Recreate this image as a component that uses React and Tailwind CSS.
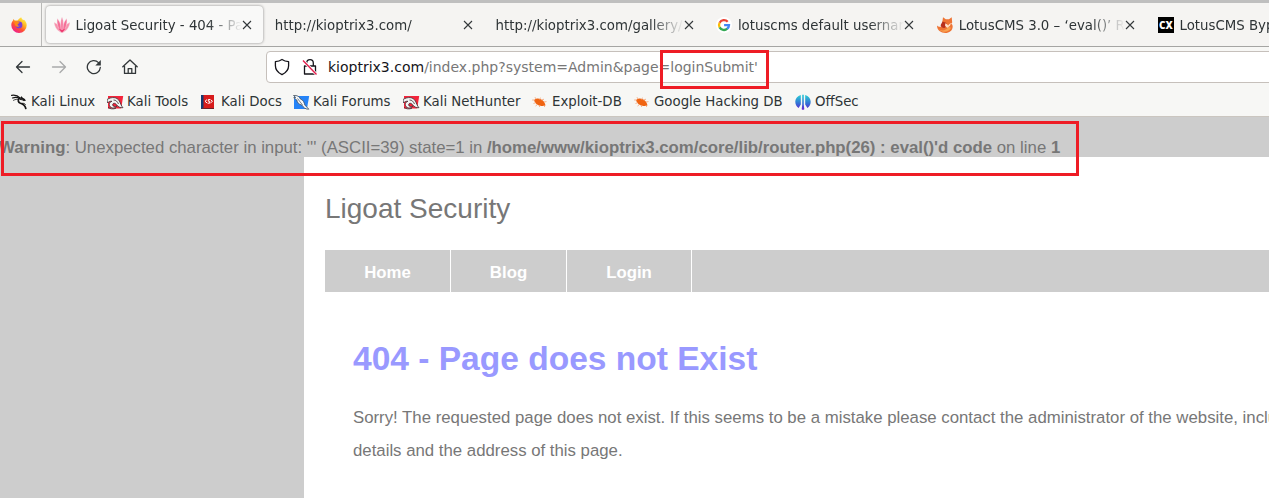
import React from "react";

function Firefox() {
  return (
    <svg width="16" height="16" viewBox="0 0 16 16" className="block shrink-0">
      <defs>
        <linearGradient id="ff" x1="0.85" y1="0.1" x2="0.25" y2="0.95">
          <stop offset="0" stopColor="#fff04a" />
          <stop offset="0.35" stopColor="#ffb01f" />
          <stop offset="0.65" stopColor="#ff5033" />
          <stop offset="1" stopColor="#ee1f8d" />
        </linearGradient>
      </defs>
      <path d="M10.2 0.2c.3 1.300 1.100 1.900 1.800 2.700l1-.2c1.600 1.300 2.700 3.200 2.700 5.500A7.700 7.700 0 0 1 .3 8.300C.3 6 1 4.500 2 3.400l.4-1.500 1.300 1.500 2.800.2c1-1.200 2.100-2.700 3.700-3.400z" fill="url(#ff)" />
      <circle cx="8" cy="7.900" r="3.400" fill="#7a3fd6" />
      <path d="M3.600 4.600c1.600-.5 2.900-.2 3.600.5l1.500.4c-.4 1-1.400 1.200-2 1.400-.3 1.400.8 2.100 2 1.800-.8 1.200-2.300 1.500-3.700.6C3.900 8.500 3.300 6.500 3.600 4.600z" fill="#ff8a16" />
    </svg>
  );
}

function Lotus() {
  return (
    <svg width="16" height="16" viewBox="0 0 16 16" className="block shrink-0">
      <g stroke="#f7f7f5" strokeWidth=".35">
        <path d="M8 15.800C3.500 14.500.7 10.500 0 5.300 3.800 7 7 10.500 8 15.800z" fill="#f792ad" />
        <path d="M8 15.800C12.500 14.500 15.300 10.500 16 5.300 12.200 7 9 10.500 8 15.800z" fill="#f792ad" />
        <path d="M8 15.800C4 12 2.500 6.500 3.300 1.600 6 4.500 8 10 8 15.800z" fill="#f56f97" />
        <path d="M8 15.800C12 12 13.500 6.500 12.700 1.600 10 4.500 8 10 8 15.800z" fill="#f56f97" />
        <path d="M8 15.800C6 10 6.300 4 8 0c1.700 4 2 10 0 15.800z" fill="#f77fa3" />
      </g>
      <path d="M4.500 11.500l3.500 4.300 3.500-4.300L8 13z" fill="#ee3a70" />
    </svg>
  );
}

function Google() {
  return (
    <svg width="16" height="16" viewBox="0 0 16 16" className="block shrink-0">
      <circle cx="8" cy="8" r="8" fill="#fff" />
      <g fill="none" strokeWidth="2.300">
        <path d="M11.700 4.700A5 5 0 0 0 3.600 5.700" stroke="#ea4335" />
        <path d="M3.600 5.700a5 5 0 0 0 0 4.700" stroke="#fbbc05" />
        <path d="M3.600 10.400a5 5 0 0 0 7.700 1.300" stroke="#34a853" />
        <path d="M11.200 11.800A5 5 0 0 0 13 8.100H8.100" stroke="#4285f4" />
      </g>
    </svg>
  );
}

function Fox() {
  return (
    <svg width="16" height="16" viewBox="0 0 16 16" className="block shrink-0">
      <path d="M0 8.600c.8 1.100 3 1.500 5 1l4-3c3-1 6-1 6.600 2.200C16.200 13 12.500 16 8.300 16 4 16 0 13.500 0 8.600z" fill="#ee7434" />
      <path d="M6 .3l2.800 2h3.200L14.700.3l.5 5.200-2.700 3.300-3.700 1-3.500-4.600z" fill="#ee7434" />
      <path d="M5.500 4.500l3.600 1.300 1 3-2.600 2.200C5 11 3.300 9.500 3.700 8z" fill="#b8301c" />
      <path d="M8.200 6.200l1.800 1 1.100 1.200 1.300-1.400 1.700-1-1.100 2.800-2.600 2.100-2.300-2z" fill="#ffe0c8" />
      <path d="M2 12.200c3 2.500 7 1.500 9.300-2.400l2.700 1C12 15 6 16.500 2 12.200z" fill="#f9a350" />
    </svg>
  );
}

function Cxs() {
  return (
    <span className="flex h-4 w-4 shrink-0 items-center justify-center bg-black font-['Open_Sans'] text-[10px] font-extrabold leading-none text-white">CX</span>
  );
}

function Dragon() {
  return (
    <svg width="17" height="16" viewBox="0 0 17 16" className="block shrink-0">
      <g fill="none" stroke="#151515" strokeLinecap="round">
        <path d="M.6 1.400c3.500-.6 6 0 8.400 2.600" strokeWidth="1.200" />
        <path d="M1.500 4c2.500-1 5-.8 7 .4" strokeWidth="1.200" />
        <path d="M2.500 6.300C4.500 5.200 6 5.200 8 5.500" strokeWidth=".8" />
        <path d="M8.500 4.200C6.500 5.800 7 8.400 9.400 9.200c2.800.7 4.600 1.800 5.400 5.300" strokeWidth="1.700" />
        <path d="M8.500 4.200c2.500-.3 4.700.4 5.600 2.300M9.500 5.500c1.500 0 2.500.3 3.500 1M11.500 4.300l-1-1.300" strokeWidth="1.200" />
        <path d="M11 9.300c1.800-.3 2.800.2 3.500 1.200" strokeWidth=".8" />
      </g>
    </svg>
  );
}

function RedDragon() {
  return (
    <svg width="17" height="16" viewBox="0 0 17 16" className="block shrink-0">
      <path d="M1 2h15.200l-2 12.500H1z" fill="#f4243b" />
      <path d="M0 5.500C5 2.500 10 3 12.400 7c1.400 2.800 1.700 4.700 3.600 6.700-2.900.2-5.100-.8-6.600-3.200-1.700-2-4-1.200-3.700.5.300 1.700 2.500 2 4 1-1 2.300-4.700 2.800-6.700.5C1.500 10.500 2.500 8 5 7.300 3.500 7 1.500 7.500.5 9z" fill="#f3f3f3" stroke="#3b2c31" strokeWidth=".8" />
      <path d="M6.500 6c2.500 0 3.800 1.500 5 4M1 13.500c2 1.500 5 1.800 8 .8" stroke="#3b2c31" strokeWidth=".8" fill="none" />
    </svg>
  );
}

function BlueDragon() {
  return (
    <svg width="17" height="16" viewBox="0 0 17 16" className="block shrink-0">
      <path d="M1 2h15.200l-2.300 13H1z" fill="#2583f7" />
      <path d="M.5 1.500C4 1 6.600 2.600 7.400 5c3 1 3.800 3.500 4.400 6l4 4.200c-3.500.2-5.500-2-7-4.200C6 10.500 4.200 8.700 3.800 6L.7 3.700l2-.3z" fill="#f8fafc" stroke="#43505e" strokeWidth=".8" />
      <path d="M4.500 4.500l5 6.500" stroke="#77818c" fill="none" />
    </svg>
  );
}

function Docs() {
  return (
    <svg width="17" height="16" viewBox="1 0 17 16" className="block shrink-0">
      <path d="M1 1h13v13.700H1z" fill="#d71b1c" />
      <path d="M1 1h2.500v14H1z" fill="#143a72" />
      <path d="M2 14.500h12" stroke="#6f2029" />
      <path d="M7 5.600L5 7.300l2 1.600M10.500 5.600l2 1.700-2 1.600M10 5.500H8.300v1.700h1.400v2H7.500" fill="none" stroke="#fff" strokeWidth="1" />
    </svg>
  );
}

function Bug() {
  return (
    <svg width="17" height="16" viewBox="0 0 17 16" className="block shrink-0">
      <path d="M2 6.500c1-2 3-2.500 5-1.800 2.500.3 5 2.300 6 5l.5 1.800-2.500.5C8 12.200 4 10.700 3 8.300z" fill="#f06412" />
      <path d="M.2 6h3M4 5L3 3.200M7 5.500L9 3.700M9.500 6l2.500-.8M12 8l2.500-.4M3.500 8.700L1.500 9.500M5.500 10.500L3.500 12M8 11.500l-.7 1.500M11.500 11.500l1.500 1.500" stroke="#f5a273" fill="none" strokeWidth=".8" />
    </svg>
  );
}

function OffSec() {
  return (
    <svg width="17" height="16" viewBox="0 0 17 16" className="block shrink-0">
      <defs>
        <linearGradient id="os" x1="0" y1="0" x2="0" y2="1">
          <stop offset="0.1" stopColor="#2bc3d4" />
          <stop offset="0.6" stopColor="#356bd5" />
          <stop offset="1" stopColor="#6b21d2" />
        </linearGradient>
      </defs>
      <path d="M5.800.9v9.600L3.600 14C1.300 12.600.3 10.300.3 7.800.3 4.500 2.600 1.800 5.800.9zM10.200.9v9.600l2.200 3.500c2.300-1.400 3.300-3.700 3.300-6.200 0-3.300-2.300-6-5.500-6.900zM7.200.7h1.600v9.800l.5 4.700L8 15.900l-1.300-.7.5-4.700z" fill="url(#os)" />
    </svg>
  );
}

function Close() {
  return (
    <svg width="10" height="10" viewBox="0 0 10 10" className="block shrink-0">
      <path d="M1 1l8 8M9 1L1 9" stroke="#33383a" strokeWidth="1.100" fill="none" />
    </svg>
  );
}

function Tab({ icon, title, active }) {
  return (
    <div className={"mr-[3.800px] flex h-[37px] w-[217px] shrink-0 items-center rounded pl-2 pr-[11px] " + (active ? "bg-[#f9f9f8] shadow-[0_0_3px_rgba(0,0,0,0.45)]" : "")}>
      {icon && <span className="mr-[5.500px] shrink-0">{icon}</span>}
      <span className="min-w-0 flex-1 overflow-hidden whitespace-nowrap pt-0.5 [mask-image:linear-gradient(to_left,transparent,black_34px)]">{title}</span>
      <Close />
    </div>
  );
}

function Bookmark({ icon, label, width }) {
  return (
    <div className={"flex shrink-0 items-center gap-[3px] whitespace-nowrap " + width}>
      {icon}
      <span>{label}</span>
    </div>
  );
}

const stroke = { fill: "none", stroke: "#33383a", strokeWidth: 1.3, strokeLinecap: "round", strokeLinejoin: "round" };

function NavIcons() {
  return (
    <div className="flex w-[266px] shrink-0 items-center gap-[19.700px] pl-[15px]">
      <svg width="16" height="16" viewBox="0 0 16 16"><path {...stroke} d="M14.500 8H1.500M7 2.500L1.500 8 7 13.500" /></svg>
      <svg width="16" height="16" viewBox="0 0 16 16"><path {...stroke} stroke="#a9aaaa" d="M1.500 8h13M9 2.500L14.500 8 9 13.500" /></svg>
      <svg width="16" height="16" viewBox="0 0 16 16"><path {...stroke} d="M14.300 8.500A6.500 6.500 0 1 1 12.500 3.600" /><path d="M14.800 1v5.500H9.300z" fill="#33383a" /></svg>
      <svg width="16" height="16" viewBox="0 0 16 16"><path {...stroke} d="M.8 7.800L8 1l7.200 6.800M2.500 7v7.400h11V7M6.200 14.200V9.600h3.600v4.600" /></svg>
    </div>
  );
}

export default function App() {
  return (
    <div className="relative h-[498px] w-full overflow-hidden bg-[#cdcdcd] font-['Liberation_Sans',Arial,sans-serif]">
      <div className="flex h-[117px] flex-col bg-[#f7f7f5] font-['DejaVu_Sans',sans-serif] text-[13.330px] text-[#2e3436]">
        <div className="flex h-[47px] shrink-0 overflow-hidden border-b border-t-[3px] border-b-[#a5a5a3] border-t-[#bfbfbf] bg-[#f5f4f2]">
          <div className="mr-1 flex w-[42px] shrink-0 items-center border-r border-[#b9b9b7] pl-[11px]"><Firefox /></div>
          <div className="flex items-center">
            <Tab active icon={<Lotus />} title="Ligoat Security - 404 - Pa" />
            <Tab title="http://kioptrix3.com/" />
            <Tab title="http://kioptrix3.com/gallery/" />
            <Tab icon={<Google />} title="lotuscms default usernam" />
            <Tab icon={<Fox />} title="LotusCMS 3.0 – ‘eval()’ R" />
            <Tab icon={<Cxs />} title="LotusCMS Bypass" />
          </div>
        </div>
        <div className="flex h-10 shrink-0 items-center overflow-hidden">
          <NavIcons />
          <div className="mr-[-10px] flex h-8 flex-1 items-center rounded border border-[#c6c0bb] bg-white pl-[7px] text-[14px]">
            <svg width="16" height="18" viewBox="0 0 16 18"><path {...stroke} stroke="#15141a" d="M8 1.500c2 1.400 4 2 6.600 2.200v4c0 4-2.600 6.900-6.600 9-4-2.100-6.600-5-6.600-9v-4C4 3.500 6 2.900 8 1.500z" /></svg>
            <svg width="18" height="18" viewBox="0 0 18 18" className="ml-[11px]"><path {...stroke} stroke="#15141a" d="M3.500 8h11v8h-11zM5.700 8V5a3.300 3.300 0 0 1 6.600 0v3" /><path d="M2 2.500l13.500 14" stroke="#fff" strokeWidth="3" /><path d="M2 2.500l13.500 14" stroke="#e51c4b" strokeWidth="1.400" /></svg>
            <span className="ml-[9px] whitespace-nowrap text-[#777]"><span className="text-[#15141a]">kioptrix3.com</span>/index.php?system=Admin&amp;page=loginSubmit'</span>
          </div>
        </div>
        <div className="flex flex-1 items-center border-b border-[#cbc6c0] pl-[11px] pt-px">
          <Bookmark width="w-[96px]" icon={<Dragon />} label="Kali Linux" />
          <Bookmark width="w-[94px]" icon={<RedDragon />} label="Kali Tools" />
          <Bookmark width="w-[92px]" icon={<Docs />} label="Kali Docs" />
          <Bookmark width="w-[110px]" icon={<BlueDragon />} label="Kali Forums" />
          <Bookmark width="w-[129px]" icon={<RedDragon />} label="Kali NetHunter" />
          <Bookmark width="w-[102px]" icon={<Bug />} label="Exploit-DB" />
          <Bookmark width="w-[161px]" icon={<Bug />} label="Google Hacking DB" />
          <Bookmark width="w-[80px]" icon={<OffSec />} label="OffSec" />
        </div>
      </div>

      <div className="-ml-px flex h-10 items-end whitespace-nowrap text-[16.770px] leading-[18px] text-[#777]">
        <p><b>Warning</b>: Unexpected character in input: ''' (ASCII=39) state=1 in <b>/home/www/kioptrix3.com/core/lib/router.php(26) : eval()'d code</b> on line <b>1</b></p>
      </div>

      <div className="ml-[304px] h-[341px] overflow-hidden bg-white pl-[21px] text-[#777]">
        <h1 className="h-[93px] pt-9 text-[28px] leading-8">Ligoat Security</h1>
        <nav className="flex h-[42px] bg-[#cdcdcd] text-[16.800px] font-bold leading-[46px] text-white">
          <a className="w-[126px] border-r border-white text-center">Home</a>
          <a className="w-[116px] border-r border-white text-center">Blog</a>
          <a className="w-[125px] border-r border-white text-center">Login</a>
        </nav>
        <div className="pl-7 pt-[47px]">
          <h2 className="text-[33.540px] font-bold leading-10 text-[#9999ff]">404 - Page does not Exist</h2>
          <p className="mt-[22px] whitespace-nowrap text-[16.800px] leading-[33px]">
            Sorry! The requested page does not exist. If this seems to be a mistake please contact the administrator of the website, including<br />
            details and the address of this page.
          </p>
        </div>
      </div>

      <div className="absolute left-[660px] top-[50px] h-[39px] w-[109px] border-[3px] border-[#ee1c25]" />
      <div className="absolute left-px top-[121px] h-[55px] w-[1078px] border-[3px] border-[#ee1c25]" />
    </div>
  );
}
